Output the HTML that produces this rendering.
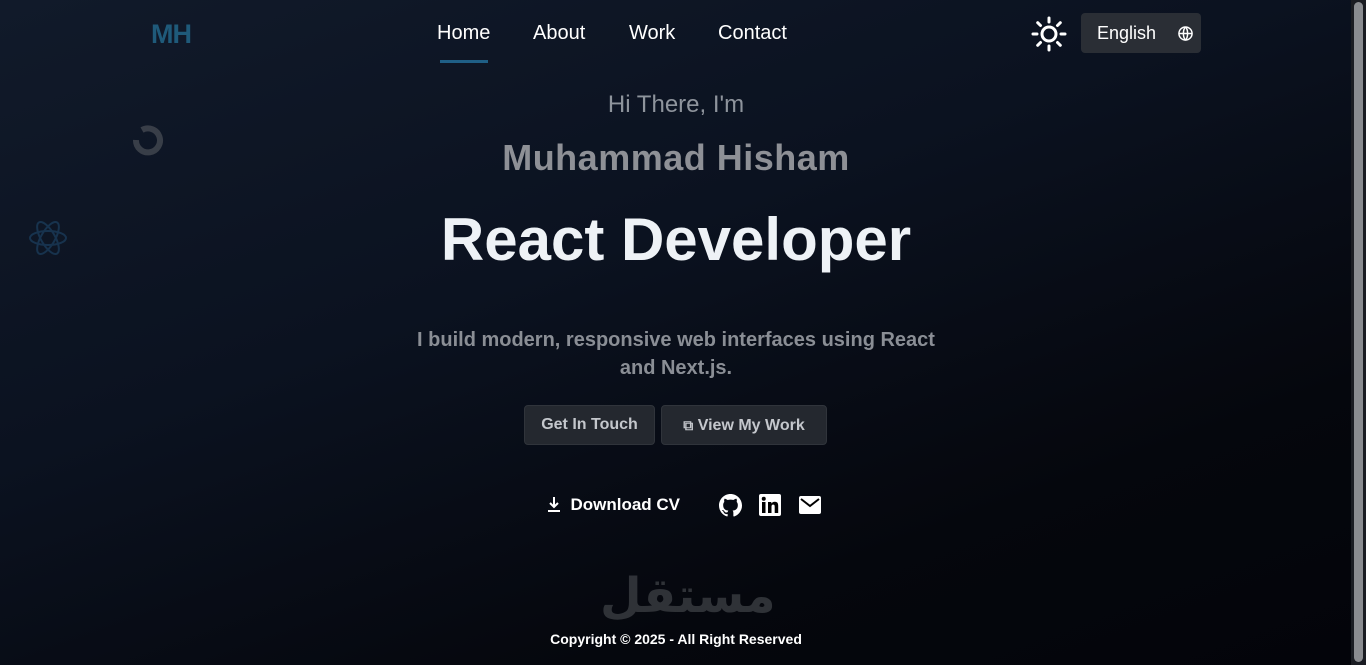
<!DOCTYPE html>
<html><head><meta charset="utf-8"><style>
*{margin:0;padding:0;box-sizing:border-box}
body{width:1366px;height:665px;overflow:hidden;font-family:"Liberation Sans",sans-serif;background:linear-gradient(160deg,#111a2a 0%,#0b1220 40%,#05070d 75%,#03040a 100%);position:relative;color:#fff}
.sb{position:absolute;right:0;top:0;width:15px;height:665px;background:#1a1c22}
.sb div{position:absolute;left:3px;top:2px;width:9px;height:660px;background:#8a8c90;border-radius:5px}
.logo{position:absolute;left:151px;top:19px;font-weight:bold;font-size:27px;color:#1f5a7a;letter-spacing:-1px}
nav{position:absolute;top:22px;left:437px;font-size:20px}
nav span{position:absolute;white-space:nowrap}
.ul{position:absolute;left:440px;top:60px;width:48px;height:3px;background:#1f5f86}
.sun{position:absolute;left:1031px;top:16px}
.lang{position:absolute;left:1081px;top:13px;width:120px;height:40px;background:#2a2e35;border-radius:4px;font-size:18px;padding:10px 0 0 16px}
.c{position:absolute;left:0;width:1352px;text-align:center}
.btn{position:absolute;top:405px;height:40px;background:#24282f;border:1px solid #30343b;border-radius:4px;color:#c4c7cc;font-weight:bold;font-size:16px;line-height:38px;text-align:center}
.ghost{position:absolute;opacity:.35}
</style></head><body>
<div class="logo">MH</div>
<nav><span style="left:0">Home</span><span style="left:96px">About</span><span style="left:192px">Work</span><span style="left:281px">Contact</span></nav>
<div class="ul"></div>
<svg class="sun" width="36" height="36" viewBox="0 0 36 36" fill="none" stroke="#fff" stroke-width="3" stroke-linecap="round"><circle cx="18" cy="18" r="7"/><path d="M18 2v4M18 30v4M2 18h4M30 18h4M6.7 6.7l2.8 2.8M26.5 26.5l2.8 2.8M6.7 29.3l2.8-2.8M26.5 9.5l2.8-2.8"/></svg>
<div class="lang">English <svg style="position:absolute;left:97px;top:13px" width="15" height="15" viewBox="0 0 16 16" fill="none" stroke="#fff" stroke-width="1.6"><circle cx="8" cy="8" r="7"/><path d="M1 8h14M8 1c-3 3-3 11 0 14M8 1c3 3 3 11 0 14"/></svg></div>
<svg class="ghost" style="left:128px;top:120px" width="40" height="40" viewBox="0 0 40 40" fill="none" stroke="#888" stroke-width="6"><path d="M8 20a12 12 0 1 0 6-10"/></svg>
<svg class="ghost" style="left:28px;top:218px" width="40" height="40" viewBox="0 0 40 40" fill="none" stroke="#2a6a9a" stroke-width="2"><ellipse cx="20" cy="20" rx="18" ry="7"/><ellipse cx="20" cy="20" rx="18" ry="7" transform="rotate(60 20 20)"/><ellipse cx="20" cy="20" rx="18" ry="7" transform="rotate(120 20 20)"/></svg>
<div class="c" style="top:91px;font-size:24px;color:#8e949c">Hi There, I'm</div>
<div class="c" style="top:137px;font-size:36px;font-weight:bold;color:#8e9096;letter-spacing:.5px">Muhammad Hisham</div>
<div class="c" style="top:205px;font-size:60px;font-weight:bold;color:#eef2f6">React Developer</div>
<div class="c" style="top:326px;font-size:20px;font-weight:bold;color:#8a8e95;line-height:28px">I build modern, responsive web interfaces using React<br>and Next.js.</div>
<div class="btn" style="left:524px;width:131px">Get In Touch</div>
<div class="btn" style="left:661px;width:166px"><span style="font-size:14px">⧉</span> View My Work</div>
<div style="position:absolute;left:547px;top:495px;font-size:17px;font-weight:bold">
<svg width="14" height="16" viewBox="0 0 14 16" style="vertical-align:-2px" fill="none" stroke="#fff" stroke-width="2"><path d="M7 1v10M3 7l4 4 4-4M1 15h12"/></svg>&nbsp; Download CV</div>
<svg style="position:absolute;left:719px;top:494px" width="23" height="23" viewBox="0 0 16 16" fill="#fff"><path d="M8 0C3.58 0 0 3.58 0 8c0 3.54 2.29 6.53 5.470 7.590.4.07.55-.17.55-.38v-1.33c-2.23.48-2.7-1.07-2.7-1.070-.36-.92-.89-1.17-.89-1.17-.73-.5.05-.49.05-.49.8.06 1.23.83 1.23.83.72 1.22 1.87.87 2.33.66.07-.52.28-.87.5-1.07-1.78-.2-3.640-.89-3.64-3.95 0-.87.31-1.59.82-2.15-.08-.2-.36-1.02.08-2.12 0 0 .67-.21 2.2.82.64-.18 1.32-.27 2-.27.68 0 1.36.09 2 .27 1.53-1.04 2.2-.82 2.2-.82.44 1.1.16 1.92.08 2.12.51.56.82 1.27.82 2.15 0 3.07-1.87 3.75-3.65 3.95.29.25.54.73.54 1.48v2.2c0 .21.15.46.55.38A8.01 8.01 0 0 0 16 8c0-4.42-3.58-8-8-8z"/></svg>
<svg style="position:absolute;left:759px;top:494px" width="22" height="22" viewBox="0 0 22 22"><rect width="22" height="22" rx="2" fill="#fff"/><rect x="3" y="8" width="3.5" height="11" fill="#000"/><circle cx="4.75" cy="4.8" r="2" fill="#000"/><path d="M9 8h3.3v1.6c.6-1 1.7-1.9 3.5-1.9 3 0 3.4 2 3.4 4.4V19h-3.5v-6c0-1.3-.1-2.4-1.5-2.4s-1.7 1-1.7 2.3V19H9z" fill="#000"/></svg>
<svg style="position:absolute;left:799px;top:496px" width="22" height="18" viewBox="0 0 22 18"><rect width="22" height="18" rx="2" fill="#fff"/><path d="M2 3l9 7 9-7" fill="none" stroke="#000" stroke-width="2"/></svg>
<div style="position:absolute;left:600px;top:568px;font-size:48px;font-weight:bold;color:#3a3d42;font-family:'DejaVu Sans',sans-serif;opacity:.8">مستقل</div>
<div class="c" style="top:631px;font-size:14px;font-weight:bold;left:-24px;width:1400px">Copyright © 2025 - All Right Reserved</div>
<div class="sb"><div></div></div>
</body></html>
